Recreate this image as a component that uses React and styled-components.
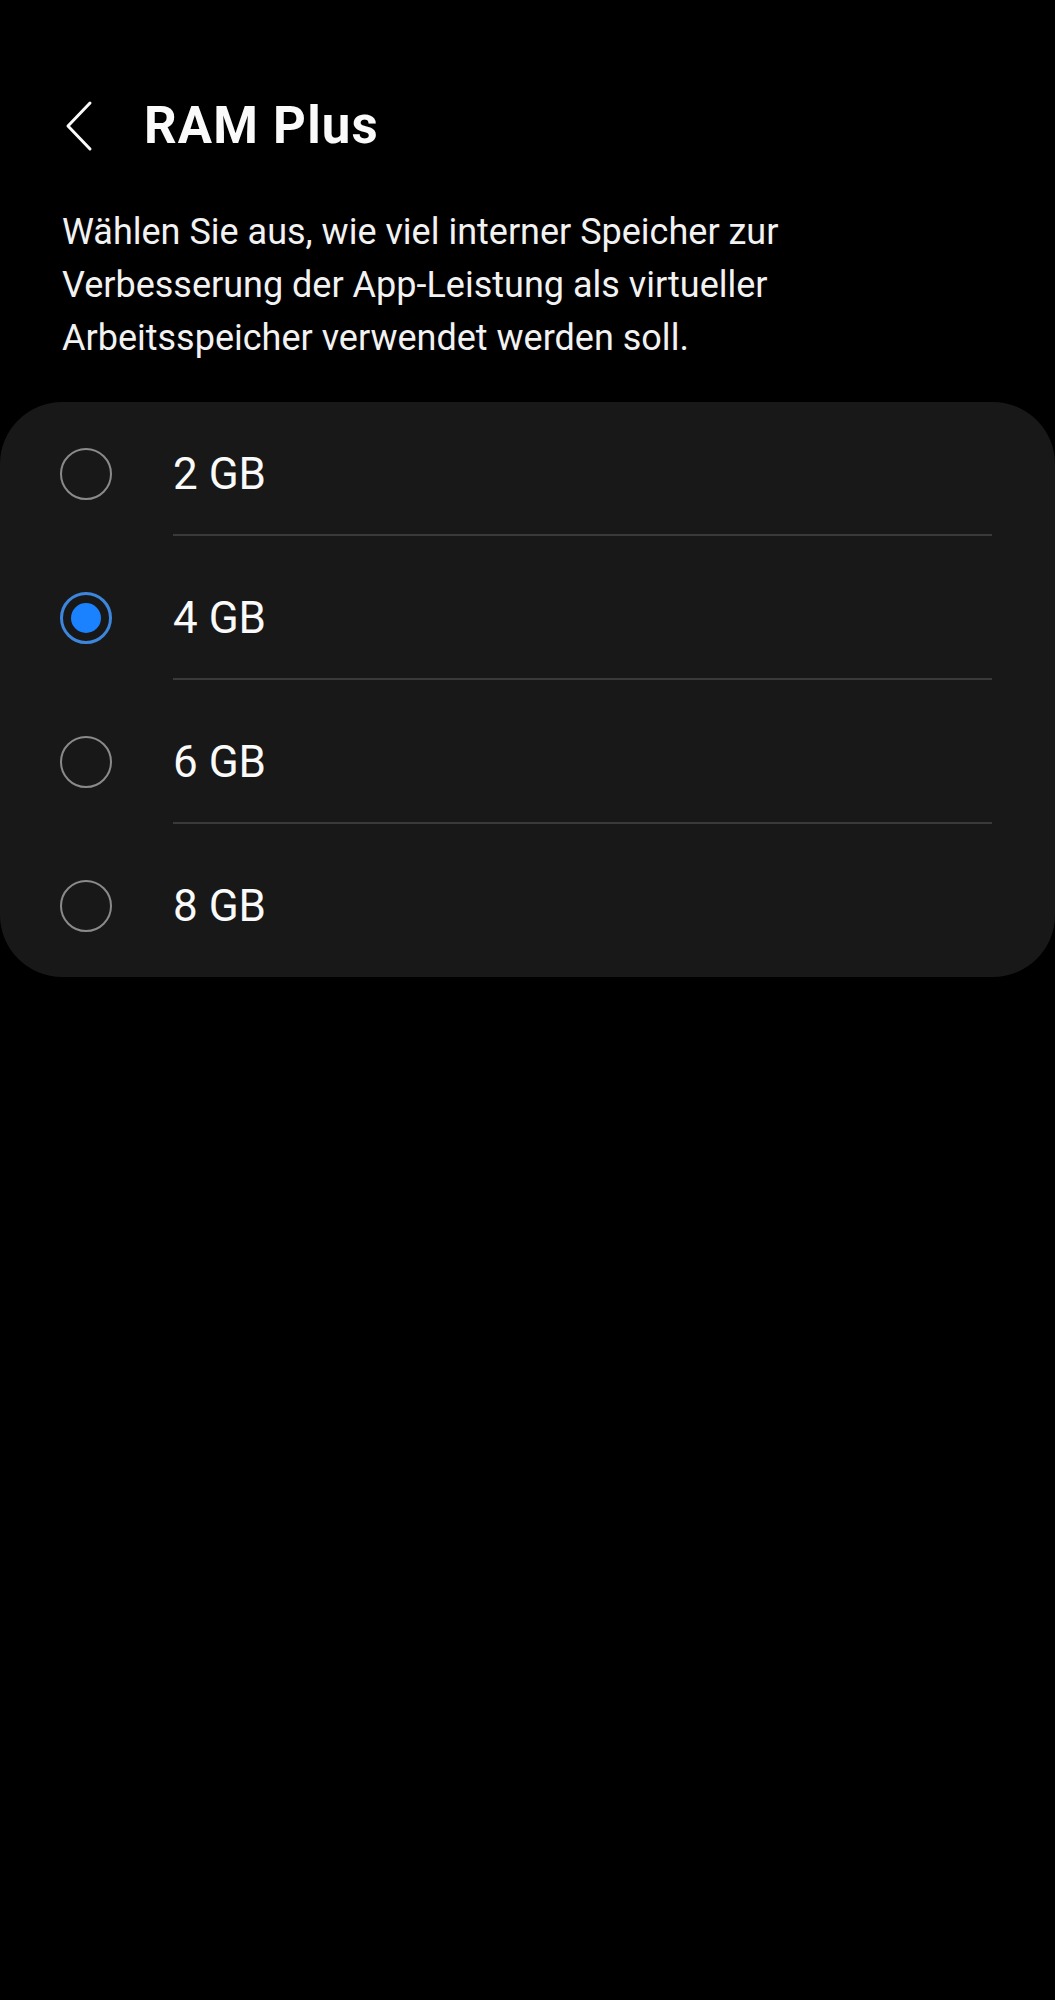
import React, { useState } from "react";
import styled, { createGlobalStyle } from "styled-components";

const Global = createGlobalStyle`
  html, body { margin: 0; padding: 0; background: #000; }
  body { font-family: Roboto, "Noto Sans", "Liberation Sans", sans-serif; -webkit-font-smoothing: antialiased; }
  #root { min-height: 2000px; background: #000; }
`;

const Page = styled.div`
  width: 1055px;
  min-height: 2000px;
  background: #000;
  color: #fafafa;
  display: flex;
  flex-direction: column;
`;

const Header = styled.header`
  display: flex;
  align-items: center;
  height: 60px;
  padding: 96px 0 0 62px;
  gap: 48px;
`;

const BackButton = styled.button`
  background: none;
  border: none;
  padding: 0;
  width: 34px;
  height: 52px;
  display: flex;
  align-items: center;
  justify-content: flex-start;
  cursor: pointer;
`;

const Title = styled.h1`
  margin: 0;
  font-family: Roboto, "Noto Sans", sans-serif;
  font-weight: 700;
  font-size: 51px;
  letter-spacing: 1.2px;
  color: #fafafa;
  line-height: 60px;
`;

const Description = styled.p`
  margin: 50px 0 0 0;
  padding: 0 40px 0 62px;
  font-size: 36px;
  line-height: 53px;
  color: #f2f2f2;
  max-width: 790px;
`;

const Card = styled.div`
  margin-top: 37px;
  background: #181818;
  border-radius: 62px;
  display: flex;
  flex-direction: column;
`;

const Row = styled.label`
  display: flex;
  align-items: center;
  gap: 61px;
  padding: 56px 0 34px 60px;
  cursor: pointer;
  &:first-child { padding-top: 46px; }
  &:last-child { padding-bottom: 45px; }
`;

const Radio = styled.span`
  box-sizing: border-box;
  width: 52px;
  height: 52px;
  border-radius: 50%;
  border: ${(p) => (p.$checked ? "3px solid #3d86de" : "2.5px solid #8a8a8a")};
  display: flex;
  align-items: center;
  justify-content: center;
  flex-shrink: 0;
  &::after {
    content: "";
    display: ${(p) => (p.$checked ? "block" : "none")};
    width: 30px;
    height: 30px;
    border-radius: 50%;
    background: #1a82ff;
  }
`;

const Label = styled.span`
  font-size: 44px;
  line-height: 52px;
  color: #fafafa;
`;

const Divider = styled.div`
  height: 2px;
  background: #3a3a3a;
  margin: 0 63px 0 173px;
`;

const options = ["2 GB", "4 GB", "6 GB", "8 GB"];

export default function App() {
  const [value, setValue] = useState("4 GB");
  return (
    <Page>
      <Global />
      <Header>
        <BackButton aria-label="Zurück">
          <svg width="32" height="52" viewBox="0 0 32 52">
            <polyline
              points="28,3 6,26 28,49"
              fill="none"
              stroke="#fafafa"
              strokeWidth="3"
              strokeLinecap="round"
              strokeLinejoin="round"
            />
          </svg>
        </BackButton>
        <Title>RAM Plus</Title>
      </Header>
      <Description>
        Wählen Sie aus, wie viel interner Speicher zur Verbesserung der App-Leistung als virtueller Arbeitsspeicher verwendet werden soll.
      </Description>
      <Card>
        {options.map((o, i) => (
          <React.Fragment key={o}>
            {i > 0 && <Divider />}
            <Row onClick={() => setValue(o)}>
              <Radio $checked={value === o} />
              <Label>{o}</Label>
            </Row>
          </React.Fragment>
        ))}
      </Card>
    </Page>
  );
}
